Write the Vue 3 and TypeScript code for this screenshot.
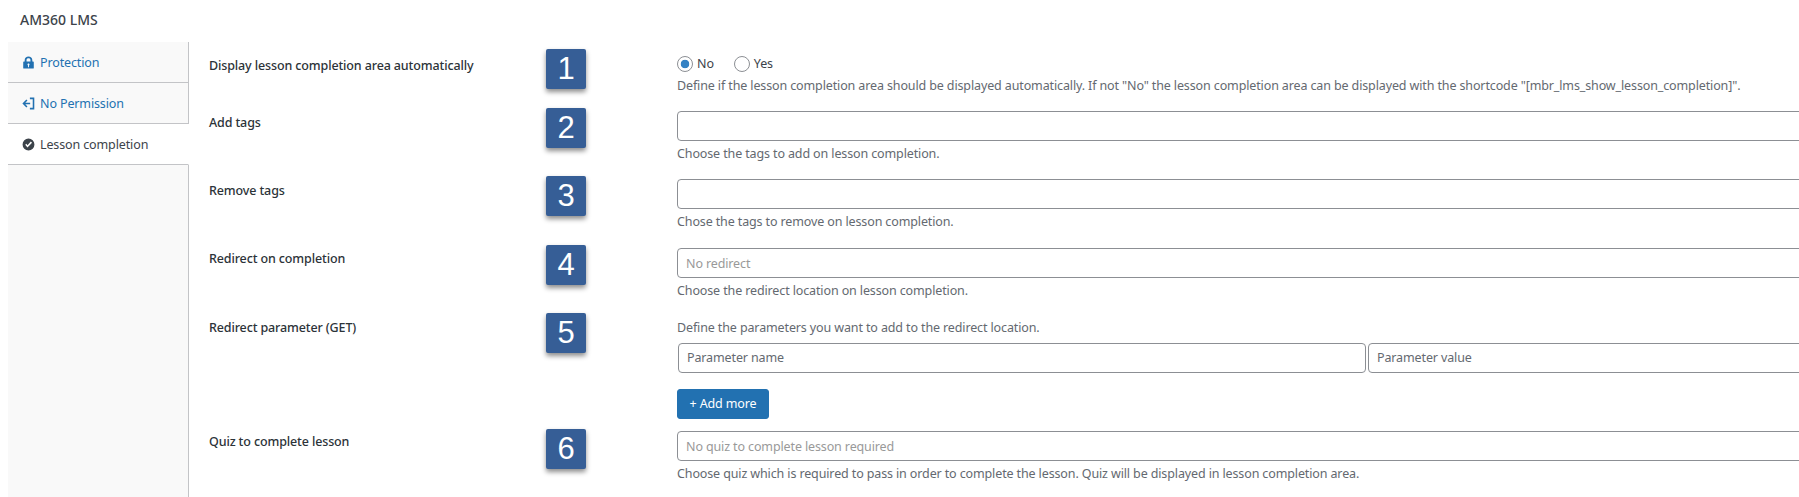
<script setup lang="ts">
interface Tab { id: string; label: string; active?: boolean }
const tabs: Tab[] = [
  { id: 'lock', label: 'Protection' },
  { id: 'exit', label: 'No Permission' },
  { id: 'check', label: 'Lesson completion', active: true },
]
const badgeOffset = (n: number): string => `${[-5, -3, -3, -3, -3, -2][n - 1]}px`
</script>

<template>
  <div class="page">
    <header class="title">AM360 LMS</header>
    <div class="panel">
      <nav class="tabs">
        <a v-for="t in tabs" :key="t.id" class="tab" :class="{ active: t.active }" href="#">
          <svg v-if="t.id === 'lock'" class="icon" viewBox="0 0 14 14" aria-hidden="true">
            <path fill="currentColor" fill-rule="evenodd" d="M2 6h.9V4.2C2.9 1.9 4.7.5 7 .5s4.1 1.4 4.1 3.7V6h.9c.4 0 .7.3.7.7v6.1c0 .4-.3.7-.7.7H2c-.4 0-.7-.3-.7-.7V6.700c0-.4.3-.7.7-.7zM4.900 6h4.200V4.200C9.100 3 8.200 2.300 7 2.300S4.900 3 4.900 4.200zM7 8c-.6 0-1.100.5-1.100 1.100 0 .4.200.8.600 1V12h1v-1.900c.4-.2.600-.6.600-1C8.100 8.500 7.600 8 7 8z" />
          </svg>
          <svg v-else-if="t.id === 'exit'" class="icon" viewBox="0 0 14 14" aria-hidden="true">
            <path fill="none" stroke="currentColor" stroke-width="1.700" d="M8.500 1.500h3.900v11H8.500M8.800 7H1.800M5.300 3.200 1.600 7l3.700 3.800" />
          </svg>
          <svg v-else class="icon" viewBox="0 0 14 14" aria-hidden="true">
            <path fill="currentColor" fill-rule="evenodd" d="M7 .6a6.400 6.400 0 1 1 0 12.800A6.400 6.400 0 0 1 7 .6zM3.500 7.200 5.900 10.300 10.800 5 9.500 3.800 5.900 7.700 4.700 6.100z" />
          </svg>
          <span>{{ t.label }}</span>
        </a>
      </nav>

      <main class="main">
        <section class="row">
          <span class="badge" :style="{ top: badgeOffset(1) }">1</span>
          <label class="label">Display lesson completion area automatically</label>
          <div class="field">
            <div class="radios">
              <label class="radio"><input type="radio" name="auto" checked />No</label>
              <label class="radio"><input type="radio" name="auto" />Yes</label>
            </div>
            <p class="desc">Define if the lesson completion area should be displayed automatically. If not "No" the lesson completion area can be displayed with the shortcode "[mbr_lms_show_lesson_completion]".</p>
          </div>
        </section>

        <section class="row">
          <span class="badge" :style="{ top: badgeOffset(2) }">2</span>
          <label class="label">Add tags</label>
          <div class="field">
            <input class="input" type="text" />
            <p class="desc">Choose the tags to add on lesson completion.</p>
          </div>
        </section>

        <section class="row">
          <span class="badge" :style="{ top: badgeOffset(3) }">3</span>
          <label class="label">Remove tags</label>
          <div class="field">
            <input class="input" type="text" />
            <p class="desc">Chose the tags to remove on lesson completion.</p>
          </div>
        </section>

        <section class="row">
          <span class="badge" :style="{ top: badgeOffset(4) }">4</span>
          <label class="label">Redirect on completion</label>
          <div class="field">
            <input class="input soft" type="text" placeholder="No redirect" />
            <p class="desc">Choose the redirect location on lesson completion.</p>
          </div>
        </section>

        <section class="row params">
          <span class="badge" :style="{ top: badgeOffset(5) }">5</span>
          <label class="label">Redirect parameter (GET)</label>
          <div class="field">
            <p class="desc first">Define the parameters you want to add to the redirect location.</p>
            <div class="pair">
              <input class="input half" type="text" placeholder="Parameter name" />
              <input class="input half" type="text" placeholder="Parameter value" />
            </div>
            <button class="btn" type="button">+ Add more</button>
          </div>
        </section>

        <section class="row">
          <span class="badge" :style="{ top: badgeOffset(6) }">6</span>
          <label class="label">Quiz to complete lesson</label>
          <div class="field">
            <input class="input soft" type="text" placeholder="No quiz to complete lesson required" />
            <p class="desc">Choose quiz which is required to pass in order to complete the lesson. Quiz will be displayed in lesson completion area.</p>
          </div>
        </section>
      </main>
    </div>
  </div>
</template>

<style scoped>
.page {
  height: 497px;
  display: flex;
  flex-direction: column;
  overflow: hidden;
  background: #fff;
  font-family: "Noto Sans", sans-serif;
  font-size: 12.5px;
  letter-spacing: -0.125px;
  color: #3c434a;
}
.title {
  height: 42px;
  flex: none;
  padding: 11px 0 0 20px;
  box-sizing: border-box;
  font-size: 14px;
  line-height: 18px;
  color: #3c434a;
  font-weight: 500;
  letter-spacing: 0;
}
.panel {
  flex: 1;
  display: flex;
  min-height: 0;
}
.tabs {
  flex: none;
  width: 181px;
  margin-left: 8px;
  box-sizing: border-box;
  background: #f9f9f9;
  border-right: 1px solid #c3c4c7;
  display: flex;
  flex-direction: column;
}
.tab {
  height: 41px;
  box-sizing: border-box;
  margin-right: -1px;
  border-right: 1px solid #c3c4c7;
  border-bottom: 1px solid #c3c4c7;
  padding-left: 14px;
  display: flex;
  align-items: center;
  gap: 5px;
  color: #2271b1;
  text-decoration: none;
}
.tab.active {
  background: #fff;
  color: #3c434a;
  border-right-color: #fff;
}
.icon {
  width: 13px;
  height: 13px;
  flex: none;
}
.main {
  flex: 1;
  min-width: 0;
  overflow: hidden;
  padding: 12px 0 0 20px;
}
.row {
  position: relative;
  display: grid;
  grid-template-columns: 468px minmax(0, 1fr);
  padding-bottom: 16.2px;
}
.row.params {
  padding-top: 3px;
  padding-bottom: 12px;
}
.label {
  font-weight: 500;
  line-height: 18px;
  padding-top: 2.5px;
  color: #2c3338;
}
.params .label {
  padding-top: 0;
}
.badge {
  position: absolute;
  left: 337px;
  width: 40px;
  height: 40px;
  border-radius: 2px;
  background: #365e96;
  box-shadow: 0 3px 5px rgba(0, 0, 0, 0.45);
  color: #fff;
  font-family: "Liberation Sans", Arial, sans-serif;
  font-size: 31px;
  letter-spacing: 0;
  line-height: 40px;
  text-align: center;
}
.radios {
  display: flex;
  gap: 20px;
  height: 19px;
  align-items: center;
}
.radio {
  display: flex;
  align-items: center;
  gap: 4px;
  line-height: 18px;
}
.radio input {
  appearance: none;
  width: 16px;
  height: 16px;
  margin: 0;
  border: 1px solid #8c8f94;
  border-radius: 50%;
  background: #fff;
  box-sizing: border-box;
}
.radio input:checked {
  background: radial-gradient(circle, #3582c4 0 4px, #fff 4.600px);
}
.desc {
  margin: 4px 0 0;
  line-height: 18px;
  color: #646970;
  white-space: nowrap;
}
.desc.first {
  margin-top: 0;
}
.input {
  display: block;
  width: 1400px;
  height: 30px;
  box-sizing: border-box;
  border: 1px solid #8c8f94;
  border-radius: 4px;
  padding: 0 8px;
  font: inherit;
  letter-spacing: inherit;
  background: #fff;
  color: #2c3338;
}
.input::placeholder {
  color: #646970;
  opacity: 1;
}
.input.soft {
  padding-top: 2px;
}
.input.soft::placeholder {
  color: #999;
}
.pair {
  display: flex;
  gap: 2px;
  margin: 6px 0 0 1px;
}
.input.half {
  width: 688px;
  flex: none;
}
.btn {
  display: block;
  margin-top: 16px;
  width: 92px;
  height: 30px;
  border: 1px solid #2271b1;
  border-radius: 3px;
  background: #2271b1;
  color: #fff;
  font: inherit;
  letter-spacing: inherit;
  padding: 0;
}
</style>

<style>
html, body { margin: 0; overflow: hidden; background: #fff; }
</style>
